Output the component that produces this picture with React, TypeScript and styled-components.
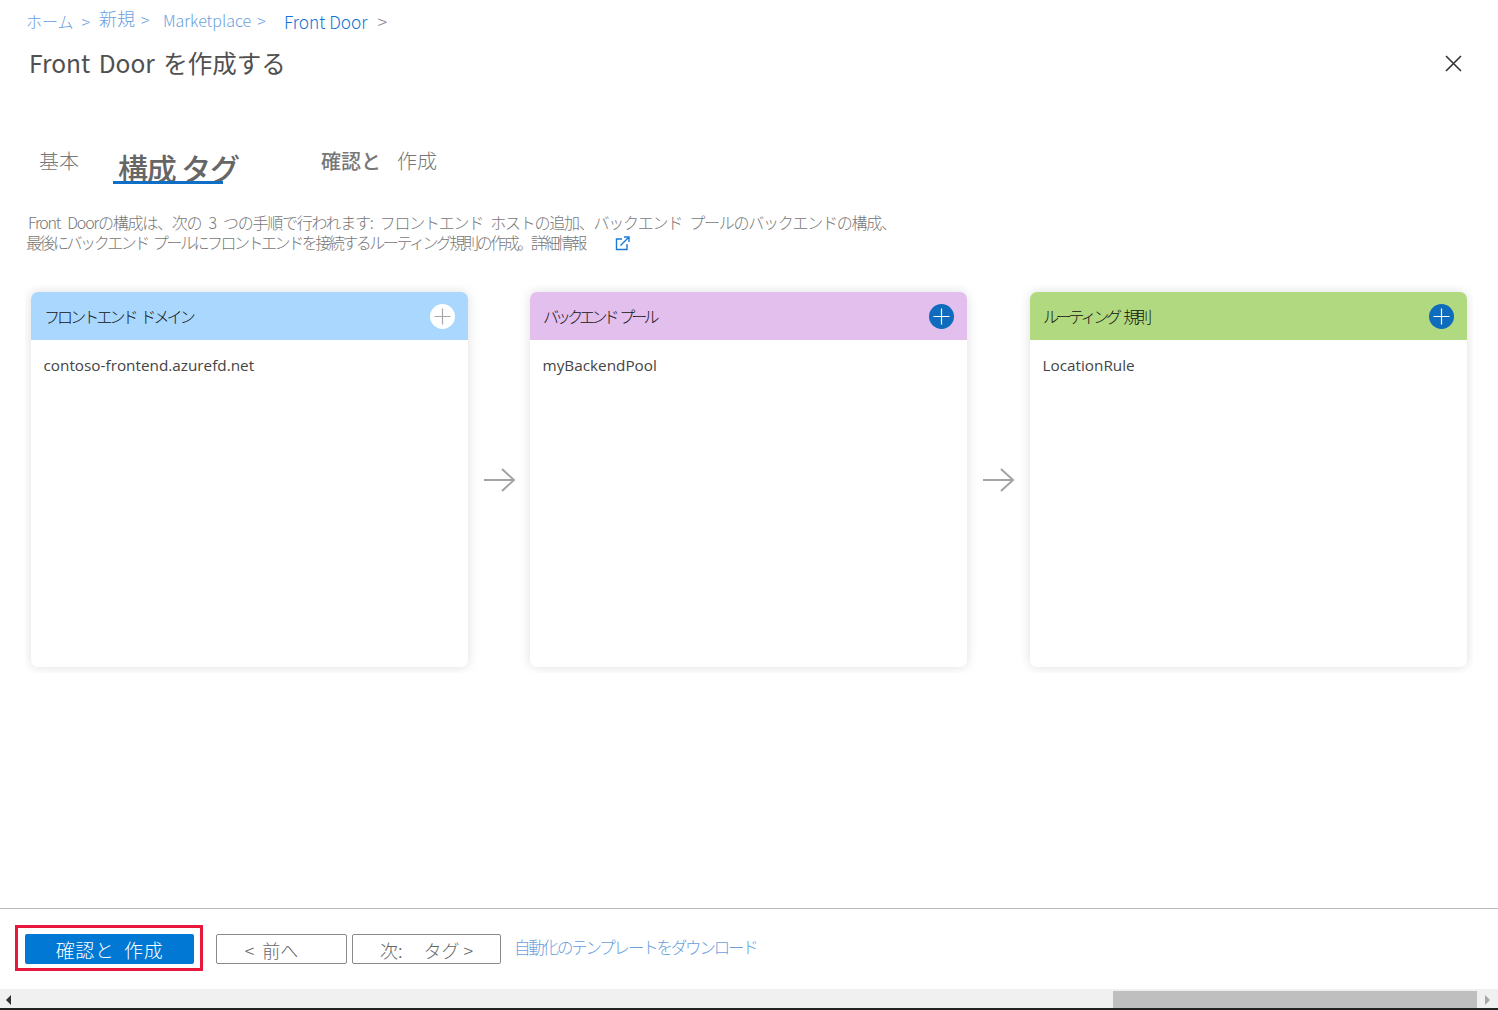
import * as React from 'react';
import styled, { createGlobalStyle } from 'styled-components';

const font = `"Noto Sans CJK JP", "Open Sans", sans-serif`;
const latin = `"Open Sans", "Noto Sans CJK JP", sans-serif`;

const GlobalStyle = createGlobalStyle`
  html, body { margin: 0; padding: 0; background: #fff; overflow: hidden; }
  * { box-sizing: border-box; }
`;

const Page = styled.div`
  width: 1498px;
  height: 1010px;
  display: flex;
  flex-direction: column;
  font-family: ${latin};
  color: #555;
`;

const Main = styled.main`
  flex: 1;
  min-height: 0;
`;

const Breadcrumb = styled.nav`
  height: 42px;
  padding: 8px 0 0 26px;
  display: flex;
  align-items: flex-start;
  line-height: 26px;
`;

const Crumb = styled.a<{ $width: number; $size: number; $current?: boolean; $lift?: number }>`
  width: ${p => p.$width}px;
  flex: none;
  margin-top: ${p => -(p.$lift || 0)}px;
  color: ${p => (p.$current ? '#1173d4' : '#6a9fdc')};
  font-family: ${font};
  font-weight: 300;
  font-size: ${p => p.$size}px;
  white-space: nowrap;
`;

const Sep = styled.span<{ $gap: number; $current?: boolean }>`
  margin-left: ${p => p.$gap}px;
  font-size: ${p => (p.$current ? 18 : 16)}px;
  color: ${p => (p.$current ? '#8a8a8a' : '#6a9fdc')};
`;

const TitleRow = styled.header`
  height: 42px;
  padding: 0 36px 0 29px;
  display: flex;
  align-items: center;
  justify-content: space-between;
`;

const Title = styled.h1`
  margin: 0 0 2px;
  font-family: ${font};
  font-weight: 400;
  font-size: 24.5px;
  word-spacing: 3px;
  color: #505050;
`;

const Tabs = styled.div`
  margin-top: 63px;
  height: 41px;
  padding-left: 39px;
  display: flex;
  align-items: flex-start;
  font-family: ${font};
  color: #777;
`;

const Tab = styled.span<{ $width: number }>`
  width: ${p => p.$width}px;
  flex: none;
  font-size: 20px;
  font-weight: 300;
  line-height: 28px;
  white-space: nowrap;
`;

const ActiveTab = styled.span`
  width: 208px;
  flex: none;
  height: 37px;
  font-size: 30px;
  font-weight: 500;
  line-height: 40px;
  letter-spacing: -1.2px;
  color: #666;
  white-space: nowrap;
  position: relative;
  padding-left: 5px;

  &::after {
    content: '';
    position: absolute;
    left: 0;
    top: 34px;
    width: 110px;
    height: 3px;
    background: #0f6fc6;
  }
`;

const Strong = styled.span`
  font-weight: 500;
  margin-right: 16px;
`;

const Intro = styled.p`
  margin: 0;
  padding: 24px 0 0 26px;
  width: 920px;
  height: 72px;
  font-family: ${font};
  font-weight: 300;
  font-size: 16px;
  line-height: 20px;
  color: #777;
  white-space: nowrap;
`;

const IntroLine = styled.span<{ $indent?: number; $tracking: number; $gap: number }>`
  display: block;
  padding-left: ${p => p.$indent || 0}px;
  letter-spacing: ${p => p.$tracking}px;
  word-spacing: ${p => p.$gap}px;
`;

const External = styled.svg`
  margin-left: 30px;
  vertical-align: -2px;
`;

const Board = styled.section`
  margin: 25px 25px 0;
  padding: 7px 6px 6px;
  height: 388px;
  overflow: hidden;
  display: grid;
  grid-template-columns: 437px 62px 437px 63px 437px;
`;

const Card = styled.article`
  height: 375px;
  background: #fff;
  border-radius: 7px;
  box-shadow: 0 0 12px rgba(0, 0, 0, 0.13);
  overflow: hidden;
`;

const CardHead = styled.div<{ $color: string }>`
  height: 48px;
  padding: 0 13px;
  display: flex;
  align-items: center;
  justify-content: space-between;
  background: ${p => p.$color};
`;

const CardTitle = styled.span<{ $tracking: number }>`
  font-family: ${font};
  font-weight: 300;
  font-size: 16px;
  letter-spacing: ${p => p.$tracking}px;
  word-spacing: 4px;
  color: #111;
`;

const AddButton = styled.button<{ $disabled?: boolean }>`
  width: 25px;
  height: 25px;
  padding: 0;
  border: 0;
  border-radius: 50%;
  display: flex;
  align-items: center;
  justify-content: center;
  background: ${p => (p.$disabled ? '#fff' : '#0f6cbd')};
  color: ${p => (p.$disabled ? '#a6a6a6' : '#fff')};
`;

const CardBody = styled.div`
  padding: 14px 12.5px;
  font-size: 15.3px;
  line-height: 22px;
  color: #444;
`;

const Connector = styled.div`
  display: flex;
  align-items: center;
  justify-content: center;
  color: #a3a3a3;
`;

const Footer = styled.footer`
  height: 81px;
  flex: none;
  border-top: 1px solid #bcbcbc;
  padding: 16px 0 0 15px;
  display: flex;
  align-items: flex-start;
  font-family: ${font};
`;

const Highlight = styled.div`
  border: 3px solid #e8173c;
  padding: 6px 6px 4px 7px;
  margin-right: 13px;
`;

const PrimaryButton = styled.button`
  width: 169px;
  height: 30px;
  padding: 2px 0 0;
  border: 0;
  border-radius: 2px;
  background: #0078d4;
  color: #fff;
  font-family: ${font};
  font-weight: 300;
  font-size: 19px;
  line-height: 26px;
  letter-spacing: 0.6px;
  display: block;
`;

const GhostButton = styled.button<{ $width: number; $shift: number }>`
  width: ${p => p.$width}px;
  height: 30px;
  margin: 9px 5px 0 0;
  padding: 2px ${p => p.$shift}px 0 0;
  border: 1px solid #8a8a8a;
  border-radius: 2px;
  background: #fff;
  color: #666;
  font-family: ${font};
  font-weight: 300;
  font-size: 18px;
  line-height: 26px;
`;

const NextHint = styled.span`
  margin-right: 9px;
`;

const DownloadLink = styled.a`
  margin: 9px 0 0 8px;
  font-weight: 300;
  font-size: 16.5px;
  line-height: 26px;
  letter-spacing: -2.2px;
  color: #6a9fdc;
  white-space: nowrap;
`;

const Scrollbar = styled.div`
  height: 21px;
  flex: none;
  background: #f0f0f0;
  border-bottom: 2px solid #222;
  padding-top: 2px;
  display: grid;
  grid-template-columns: 1113px 364px 21px;
`;

const ScrollArrow = styled.span<{ $dir: 'left' | 'right' }>`
  display: flex;
  align-items: center;
  justify-content: ${p => (p.$dir === 'left' ? 'flex-start' : 'center')};
  padding-left: ${p => (p.$dir === 'left' ? 6 : 0)}px;

  &::before {
    content: '';
    border-top: 5px solid transparent;
    border-bottom: 5px solid transparent;
    ${p => (p.$dir === 'left' ? 'border-right: 5px solid #333;' : 'border-left: 5px solid #a6a6a6;')}
  }
`;

const ScrollThumb = styled.div`
  background: #bfbfbf;
  height: 17px;
`;

const Plus = () => (
  <svg width="17" height="17" viewBox="0 0 17 17" fill="none" stroke="currentColor" strokeWidth="1.2">
    <path d="M8.5 0.5v16M0.5 8.5h16" />
  </svg>
);

const Arrow = () => (
  <svg width="33" height="26" viewBox="0 0 33 26" fill="none" stroke="currentColor" strokeWidth="2">
    <path d="M1 13h30M19 2l12 11-12 11" />
  </svg>
);

const cards = [
  { title: 'フロントエンド ドメイン', color: '#a9d7fd', item: 'contoso-frontend.azurefd.net', tracking: -2.9, disabled: true },
  { title: 'バックエンド プール', color: '#e2bfec', item: 'myBackendPool', tracking: -3.9 },
  { title: 'ルーティング 規則', color: '#b1d97f', item: 'LocationRule', tracking: -3.2 },
];

const App = () => (
  <Page>
    <GlobalStyle />
    <Main>
      <Breadcrumb>
        <Crumb $width={73} $size={16}>
          ホーム<Sep $gap={8}>&gt;</Sep>
        </Crumb>
        <Crumb $width={64} $size={18} $lift={3}>
          新規<Sep $gap={6}>&gt;</Sep>
        </Crumb>
        <Crumb $width={121} $size={16} $lift={1}>
          Marketplace<Sep $gap={6}>&gt;</Sep>
        </Crumb>
        <Crumb $width={110} $size={17.3} $current>
          Front Door<Sep $gap={10} $current>&gt;</Sep>
        </Crumb>
      </Breadcrumb>
      <TitleRow>
        <Title>Front Door を作成する</Title>
        <svg width="17" height="17" viewBox="0 0 17 17" fill="none" stroke="#333" strokeWidth="1.6">
          <path d="M1 1l15 15M16 1L1 16" />
        </svg>
      </TitleRow>
      <Tabs>
        <Tab $width={74}>基本</Tab>
        <ActiveTab>構成 タグ</ActiveTab>
        <Tab $width={130}>
          <Strong>確認と</Strong>作成
        </Tab>
      </Tabs>
      <Intro>
        <IntroLine $indent={2} $tracking={-1.25} $gap={5}>
          Front Doorの構成は、次の 3 つの手順で行われます: フロントエンド ホストの追加、バックエンド プールのバックエンドの構成、
        </IntroLine>
        <IntroLine $tracking={-2.47} $gap={4}>
          最後にバックエンド プールにフロントエンドを接続するルーティング規則の作成。詳細情報
          <External width="15" height="15" viewBox="0 0 15 15" fill="none" stroke="#1a7ad9" strokeWidth="1.4">
            <path d="M7 3H1.5v10.5H12V8M5.5 9.5L14 1M9 1h5v5" />
          </External>
        </IntroLine>
      </Intro>
      <Board>
        {cards.map((card, i) => (
          <React.Fragment key={card.title}>
            {i > 0 && (
              <Connector>
                <Arrow />
              </Connector>
            )}
            <Card>
              <CardHead $color={card.color}>
                <CardTitle $tracking={card.tracking}>{card.title}</CardTitle>
                <AddButton $disabled={card.disabled}>
                  <Plus />
                </AddButton>
              </CardHead>
              <CardBody>{card.item}</CardBody>
            </Card>
          </React.Fragment>
        ))}
      </Board>
    </Main>
    <Footer>
      <Highlight>
        <PrimaryButton>確認と&nbsp; 作成</PrimaryButton>
      </Highlight>
      <GhostButton $width={131} $shift={20}>&lt;&nbsp; 前へ</GhostButton>
      <GhostButton $width={149} $shift={0}>
        <NextHint>次:</NextHint>
        &nbsp;&nbsp; タグ &gt;
      </GhostButton>
      <DownloadLink>自動化のテンプレートをダウンロード</DownloadLink>
    </Footer>
    <Scrollbar>
      <ScrollArrow $dir="left" />
      <ScrollThumb />
      <ScrollArrow $dir="right" />
    </Scrollbar>
  </Page>
);

export default App;
